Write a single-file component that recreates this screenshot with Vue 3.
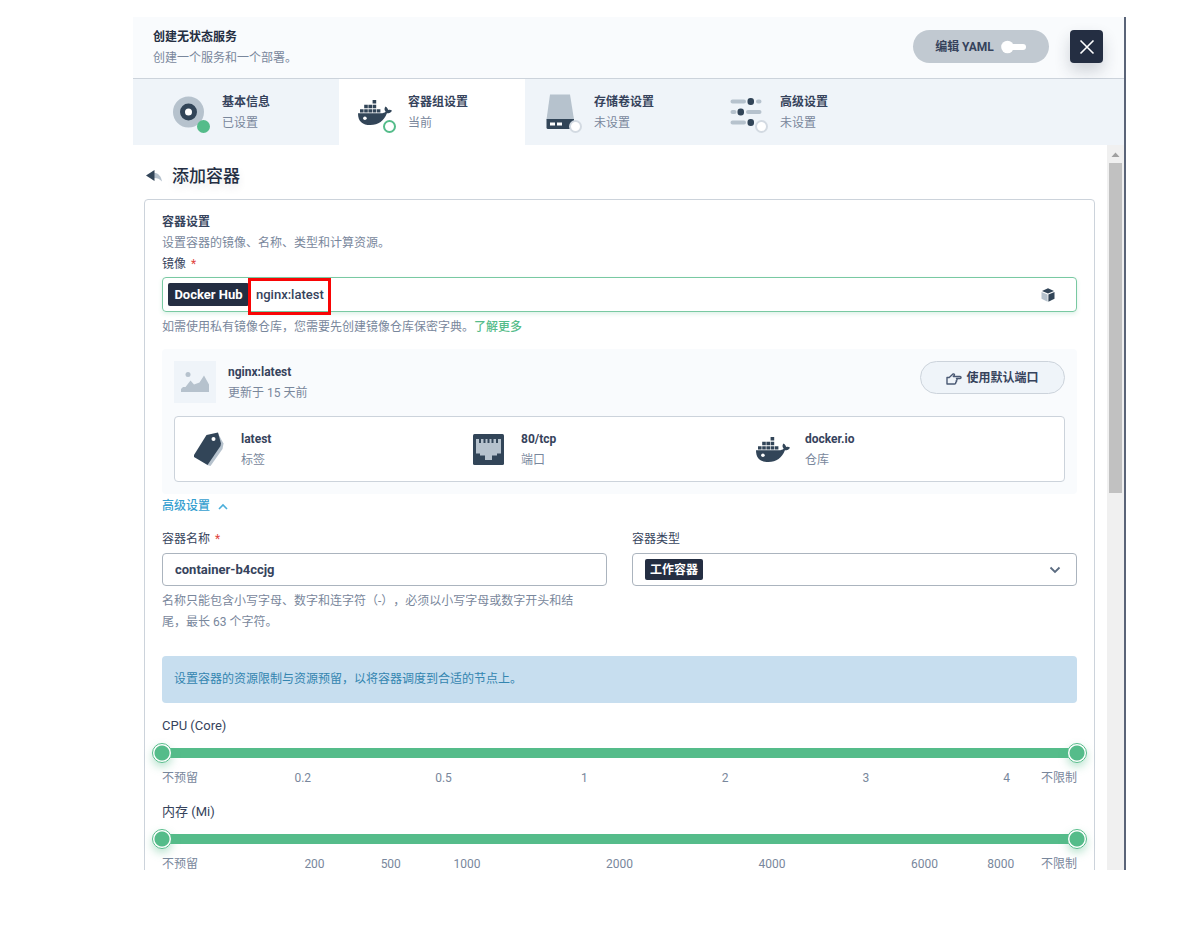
<script setup>
import { ref } from 'vue'

const steps = [
  { key: 'basic', title: '基本信息', state: '已设置', status: 'done' },
  { key: 'pod', title: '容器组设置', state: '当前', status: 'current' },
  { key: 'volume', title: '存储卷设置', state: '未设置', status: 'todo' },
  { key: 'advanced', title: '高级设置', state: '未设置', status: 'todo' }
]

const image = ref('nginx:latest')
const containerName = ref('container-b4ccjg')
const containerType = ref('worker')

const sliders = ref([
  {
    id: 'cpu',
    label: 'CPU (Core)',
    units: 13,
    from: 0,
    to: 13,
    marks: [
      { at: 2, text: '0.2' },
      { at: 4, text: '0.5' },
      { at: 6, text: '1' },
      { at: 8, text: '2' },
      { at: 10, text: '3' },
      { at: 12, text: '4' }
    ]
  },
  {
    id: 'memory',
    label: '内存 (Mi)',
    units: 12,
    from: 0,
    to: 12,
    marks: [
      { at: 2, text: '200' },
      { at: 3, text: '500' },
      { at: 4, text: '1000' },
      { at: 6, text: '2000' },
      { at: 8, text: '4000' },
      { at: 10, text: '6000' },
      { at: 11, text: '8000' }
    ]
  }
])
</script>

<template>
  <div class="dialog">
    <svg class="defs" width="0" height="0" aria-hidden="true">
      <symbol id="docker" viewBox="0 0 34 25">
        <path d="M0 13.2H24.4C26.6 13 27.4 12.3 27.6 11.6C26 9.8 26.3 8 27.5 6.4C29.2 7.4 30 8.8 30.1 10C31.8 9.6 33.2 9.9 34 10.7C33.2 12.4 31.4 13.2 28.9 13.3C26 20.8 20.4 25 12.4 25C4.6 25 0 21.6 0 13.2Z" fill="#324558" />
        <g fill="#324558">
          <path d="M14.6 0h3.6v3.6h-3.6zM6.2 4.8h3.6v3.5H6.2zM10.4 4.8H14v3.5h-3.6zM14.6 4.8h3.6v3.5h-3.6zM2 9.2h3.6v3.3H2zM6.2 9.2h3.6v3.3H6.2zM10.4 9.2H14v3.3h-3.6zM14.6 9.2h3.6v3.3h-3.6zM18.8 9.2h3.6v3.3h-3.6z" />
        </g>
        <circle cx="6.9" cy="18.2" r="1.8" fill="#fff" />
      </symbol>
    </svg>

    <header class="head">
      <div class="head-text">
        <h1>创建无状态服务</h1>
        <p>创建一个服务和一个部署。</p>
      </div>
      <button type="button" class="yaml">
        <span>编辑 YAML</span>
        <svg width="26" height="14" viewBox="0 0 26 14" aria-hidden="true">
          <rect x="8" y="4" width="17" height="6" rx="3" fill="#fff" />
          <circle cx="6.5" cy="7" r="6.3" fill="#fff" />
        </svg>
      </button>
      <button type="button" class="close" aria-label="关闭">
        <svg width="16" height="16" viewBox="0 0 16 16" aria-hidden="true">
          <path d="M1.5 1.5L14.5 14.5M14.5 1.5L1.5 14.5" stroke="#fff" stroke-width="1.6" fill="none" />
        </svg>
      </button>
    </header>

    <nav class="steps">
      <button v-for="s in steps" :key="s.key" type="button" class="step" :class="s.status">
        <span class="step-icon">
          <svg v-if="s.key === 'basic'" width="36" height="36" viewBox="0 0 36 36" aria-hidden="true">
            <circle cx="17.5" cy="18" r="15.5" fill="#b6c2cd" />
            <circle cx="17.5" cy="18" r="6" fill="#fff" stroke="#324558" stroke-width="5" />
          </svg>
          <svg v-else-if="s.key === 'pod'" class="whale" width="34" height="25" aria-hidden="true"><use href="#docker" /></svg>
          <svg v-else-if="s.key === 'volume'" width="36" height="36" viewBox="0 0 36 36" aria-hidden="true">
            <path d="M7 0.5H27L31 25.5H3.500Z" fill="#b6c2cd" />
            <path d="M3.500 25H31V33.500Q31 35 29.500 35H5Q3.500 35 3.500 33.500Z" fill="#324558" />
            <path d="M7 28.500h5v3H7zM14 28.500h5v3h-5z" fill="#fff" />
          </svg>
          <svg v-else width="36" height="36" viewBox="0 0 36 36" aria-hidden="true">
            <g stroke="#b6c2cd" stroke-width="4" stroke-linecap="round">
              <path d="M3.500 7.500H15M29 7.500H30.500M3.500 18H5.500M19 18H30.500M3.500 28.500H15" />
            </g>
            <g fill="#324558">
              <rect x="18.500" y="4" width="6.500" height="7" rx="3" />
              <rect x="8.500" y="14.500" width="6.500" height="7" rx="3" />
              <rect x="18.500" y="25" width="6.500" height="7" rx="3" />
            </g>
          </svg>
          <i class="dot"></i>
        </span>
        <span class="pair">
          <strong>{{ s.title }}</strong>
          <span>{{ s.state }}</span>
        </span>
      </button>
    </nav>

    <div class="body">
      <main class="content">
        <h2>
          <button type="button" class="back" aria-label="返回">
            <svg width="16" height="12" viewBox="0 0 16 12" aria-hidden="true">
              <path d="M8 2.800C12.500 3.200 15.300 6.500 16 11.500C13.800 8.900 11.500 8 8 7.900Z" fill="#b6c2cd" />
              <path d="M0 5.500L8.500 0V11Z" fill="#324558" />
            </svg>
          </button>
          添加容器
        </h2>

        <section class="card">
          <h3>容器设置</h3>
          <p class="muted">设置容器的镜像、名称、类型和计算资源。</p>
          <label class="label" for="image">镜像 <em>*</em></label>
          <div class="image-field">
            <span class="hub">Docker Hub</span>
            <input id="image" v-model="image" type="text" />
            <button type="button" class="pick" aria-label="选择镜像">
              <svg width="14" height="14" viewBox="0 0 14 14" aria-hidden="true">
                <path d="M7 0.300L13 2.900L7 5.600L1 2.900Z" fill="#324558" />
                <path d="M0.500 3.900L6.600 6.600V13.800L0.500 10.800Z" fill="#b6c2cd" />
                <path d="M13.500 3.900L7.400 6.600V13.800L13.500 10.800Z" fill="#324558" />
              </svg>
            </button>
            <i class="marker"></i>
          </div>
          <p class="muted hint">如需使用私有镜像仓库，您需要先创建镜像仓库保密字典。<a href="#">了解更多</a></p>

          <div class="image-info">
            <div class="image-top">
              <span class="thumb">
                <svg width="30" height="24" viewBox="0 0 30 24" aria-hidden="true">
                  <circle cx="8" cy="4.500" r="2.500" fill="#b6c2cd" />
                  <path d="M1 22V19L3 17H5.500L10.500 10.500L14 14.500L19.500 12.500L24 5.500L29 14.500V22Z" fill="#b6c2cd" />
                </svg>
              </span>
              <span class="pair">
                <strong>nginx:latest</strong>
                <span>更新于 15 天前</span>
              </span>
              <button type="button" class="ports">
                <svg width="16" height="12" viewBox="0 0 16 12" aria-hidden="true">
                  <path d="M1 4.500H3.200L7 1C8.200 0.500 8.800 1.500 8.200 2.300L7.300 3.500H14C15.400 3.600 15.400 5.400 14 5.500H10.500C11.400 6 11.200 7.200 10.300 7.400C10.900 8.200 10.500 9 9.700 9.200C10 10.200 9.500 11 8.500 11H1Z" fill="none" stroke="#4a5974" stroke-width="1.400" stroke-linejoin="round" />
                </svg>
                使用默认端口
              </button>
            </div>
            <div class="facts">
              <div class="fact">
                <span class="fact-icon">
                  <svg width="32" height="36" viewBox="0 0 32 36" aria-hidden="true">
                    <path d="M25 2.500L30.500 12.500L29.500 18L17.500 35L14 34Z" fill="#b6c2cd" />
                    <path d="M13.500 4L25 1.500L28 12.500L27.500 15L14.500 34L1 26V24Z" fill="#324558" />
                    <circle cx="20.500" cy="8" r="2" fill="#fff" />
                  </svg>
                </span>
                <span class="pair"><strong>latest</strong><span>标签</span></span>
              </div>
              <div class="fact">
                <span class="fact-icon">
                  <svg width="31" height="31" viewBox="0 0 31 31" aria-hidden="true">
                    <rect width="31" height="31" rx="1.500" fill="#324558" />
                    <path d="M3 5H6V9H8V5H10.500V9H12.500V5H14.500V9H16.500V5H18.500V9H20.500V5H23V9H25V5H28V19.500H24V21.500H19V26H12V21.500H7V19.500H3Z" fill="#b6c2cd" />
                  </svg>
                </span>
                <span class="pair"><strong>80/tcp</strong><span>端口</span></span>
              </div>
              <div class="fact">
                <span class="fact-icon"><svg width="34" height="25" aria-hidden="true"><use href="#docker" /></svg></span>
                <span class="pair"><strong>docker.io</strong><span>仓库</span></span>
              </div>
            </div>
          </div>

          <button type="button" class="toggle">
            高级设置
            <svg width="10" height="7" viewBox="0 0 10 7" aria-hidden="true">
              <path d="M1 6L5 2L9 6" fill="none" stroke="#4aaeda" stroke-width="1.600" />
            </svg>
          </button>

          <div class="columns">
            <div>
              <label class="label" for="name">容器名称 <em>*</em></label>
              <input id="name" v-model="containerName" class="control" type="text" />
              <p class="muted hint name-hint">名称只能包含小写字母、数字和连字符（-），必须以小写字母或数字开头和结尾，最长 63 个字符。</p>
            </div>
            <div>
              <label class="label" for="type">容器类型</label>
              <div class="select">
                <select id="type" v-model="containerType" class="control">
                  <option value="worker">工作容器</option>
                  <option value="init">初始容器</option>
                </select>
                <svg width="12" height="8" viewBox="0 0 12 8" aria-hidden="true">
                  <path d="M1.500 1.500L6 6L10.500 1.500" fill="none" stroke="#5a6b80" stroke-width="1.800" />
                </svg>
              </div>
            </div>
          </div>

          <div class="notice">设置容器的资源限制与资源预留，以将容器调度到合适的节点上。</div>

          <div v-for="s in sliders" :key="s.id" class="slider">
            <label :for="s.id">{{ s.label }}</label>
            <div class="track">
              <input :id="s.id" v-model.number="s.from" type="range" min="0" :max="s.units" />
              <input v-model.number="s.to" type="range" min="0" :max="s.units" :aria-label="s.label + ' 限制'" />
            </div>
            <div class="scale" :style="{ gridTemplateColumns: `repeat(${s.units * 2}, minmax(0, 1fr))` }">
              <span class="first">不预留</span>
              <span v-for="m in s.marks" :key="m.at" :style="{ gridColumn: `${m.at * 2} / span 2` }">{{ m.text }}</span>
              <span class="last">不限制</span>
            </div>
          </div>
        </section>
      </main>
      <div class="scrollbar" aria-hidden="true">
        <svg width="9" height="5" viewBox="0 0 9 5"><path d="M0.500 5L4.500 0.500L8.500 5Z" fill="#a0a0a0" /></svg>
        <div class="bar"></div>
      </div>
    </div>
  </div>
</template>

<style>
body {
  background: #fff;
}
</style>

<style scoped>
* {
  box-sizing: border-box;
}
.dialog {
  display: flex;
  flex-direction: column;
  height: calc(100vh - 74px);
  margin: 17px 72px 57px 133px;
  overflow: hidden;
  border-right: 2px solid #5a6478;
  font-family: Roboto, "Noto Sans CJK SC", sans-serif;
  font-size: 12px;
  line-height: 21px;
  color: #36435c;
  text-spacing-trim: space-all;
}
.defs {
  position: absolute;
}
h1, h2, h3, p {
  margin: 0;
  font-size: 12px;
}
button, input, select {
  font: inherit;
  color: inherit;
}
button {
  padding: 0;
  border: 0;
  background: none;
  cursor: pointer;
}
svg {
  display: block;
  flex: none;
}
.head {
  display: flex;
  flex: none;
  align-items: center;
  height: 62px;
  padding: 0 21px 2px 20px;
  background: #f9fbfd;
  border-bottom: 1px solid #ccd3db;
}
.head-text {
  flex: 1;
  padding-top: 2px;
}
h1 {
  color: #242e42;
}
.head p, .muted {
  color: #79879c;
}
.yaml {
  display: flex;
  align-items: center;
  justify-content: center;
  gap: 7px;
  width: 136px;
  height: 33px;
  margin-right: 21px;
  padding-top: 1px;
  border-radius: 17px;
  background: #c1c9d1;
  font-weight: 700;
}
.close {
  display: grid;
  place-items: center;
  width: 33px;
  height: 33px;
  border-radius: 4px;
  background: #242e42;
  box-shadow: 0 8px 16px rgba(36, 46, 66, 0.2);
}
.steps {
  display: flex;
  flex: none;
  height: 66px;
  padding-left: 20px;
  background: #eff4f9;
}
.step {
  display: flex;
  align-items: center;
  gap: 15px;
  width: 186px;
  padding-left: 18px;
  text-align: left;
}
.step.current {
  background: #fff;
}
.step-icon {
  position: relative;
  display: grid;
  place-items: center;
  width: 36px;
  height: 36px;
}
.dot {
  position: absolute;
  right: -3px;
  bottom: -3px;
  width: 13px;
  height: 13px;
  border: 2px solid #d3dae2;
  border-radius: 50%;
  background: #fff;
}
.done .dot {
  border-color: #55bc8a;
  background: #55bc8a;
}
.current .dot {
  border-color: #55bc8a;
}
.pair {
  display: flex;
  flex-direction: column;
  padding-top: 2px;
  color: #79879c;
}
.pair strong {
  color: #36435c;
}
.body {
  display: flex;
  flex: 1;
  min-height: 0;
}
.content {
  flex: 1;
  min-width: 0;
  padding: 20px 12px 0 11px;
  overflow: hidden;
}
h2 {
  display: flex;
  align-items: center;
  gap: 10px;
  height: 22px;
  margin-bottom: 12px;
  padding-left: 2px;
  font-size: 17px;
  font-weight: 500;
  color: #242e42;
  text-shadow: 0 4px 8px rgba(36, 46, 66, 0.1);
}
.card {
  padding: 12px 17px;
  border: 1px solid #ccd3db;
  border-radius: 4px;
}
.label {
  display: block;
}
em {
  margin-left: 2px;
  color: #e0443e;
  font-style: normal;
}
.image-field {
  position: relative;
  display: flex;
  align-items: center;
  height: 35px;
  margin-top: 2px;
  padding: 0 21px 0 5px;
  border: 1px solid #79c9a2;
  border-radius: 4px;
  box-shadow: 0 2px 4px rgba(85, 188, 138, 0.2);
}
.hub {
  width: 81px;
  border-radius: 2px;
  background: #242e42;
  color: #fff;
  font-size: 13px;
  font-weight: 700;
  line-height: 23px;
  text-align: center;
}
.image-field input {
  flex: 1;
  min-width: 0;
  padding: 0 7px;
  border: 0;
  outline: 0;
  background: none;
  font-size: 13px;
  font-weight: 500;
}
.marker {
  position: absolute;
  top: 0;
  left: 85px;
  width: 83px;
  height: 37px;
  border: 3px solid #f80505;
  pointer-events: none;
}
.hint {
  margin-top: 5px;
}
a {
  color: #55bc8a;
  font-weight: 500;
  text-decoration: none;
}
.image-info {
  margin-top: 11px;
  padding: 12px;
  border-radius: 4px;
  background: #f9fbfd;
}
.image-top {
  display: flex;
  align-items: center;
  gap: 12px;
  height: 42px;
  margin-bottom: 13px;
}
.thumb {
  display: grid;
  place-items: center;
  width: 42px;
  height: 42px;
  background: #eff4f9;
}
.ports {
  display: flex;
  align-items: center;
  justify-content: center;
  align-self: flex-start;
  gap: 4px;
  width: 145px;
  height: 33px;
  margin-left: auto;
  padding-top: 2px;
  border: 1px solid #ccd3db;
  border-radius: 17px;
  background: #eff4f9;
  font-weight: 700;
}
.facts {
  display: grid;
  grid-template-columns: 280fr 284fr 287fr;
  align-items: center;
  height: 66px;
  padding: 0 21px 0 17px;
  border: 1px solid #ccd3db;
  border-radius: 4px;
  background: #fff;
}
.fact {
  display: flex;
  align-items: center;
  gap: 16px;
}
.fact-icon {
  display: grid;
  place-items: center;
  width: 33px;
}
.toggle {
  display: flex;
  align-items: center;
  gap: 8px;
  height: 21px;
  margin-top: 2px;
  color: #369fd0;
  font-weight: 500;
}
.columns {
  display: grid;
  grid-template-columns: 1fr 1fr;
  gap: 25px;
  margin-top: 12px;
}
.control {
  display: block;
  width: 100%;
  height: 33px;
  margin-top: 3px;
  padding: 0 12px;
  border: 1px solid #abb4be;
  border-radius: 4px;
  outline: 0;
  background: #fff;
  font-size: 13px;
  font-weight: 700;
}
.name-hint {
  padding-right: 18px;
}
.select {
  position: relative;
}
.select::before {
  content: "";
  position: absolute;
  top: 6px;
  left: 13px;
  width: 58px;
  height: 21px;
  border-radius: 2px;
  background: #242e42;
}
.select .control {
  position: relative;
  padding: 1px 17px 0;
  appearance: none;
  background: none;
  color: #fff;
  font-size: 12px;
}
.select svg {
  position: absolute;
  top: 13px;
  right: 16px;
  pointer-events: none;
}
.notice {
  margin: 23px 0 12px;
  padding: 13px 12px;
  border-radius: 4px;
  background: #c7deef;
  color: #3385b0;
}
.slider {
  margin-bottom: 13px;
}
.slider label {
  display: block;
  font-size: 13px;
}
.track {
  position: relative;
  height: 20px;
  margin: 7px 0 5px;
  background: linear-gradient(#55bc8a, #55bc8a) center / 100% 10px no-repeat;
}
.slider + .slider {
  margin-top: -1px;
}
.track input {
  position: absolute;
  top: 0;
  left: -10px;
  width: calc(100% + 20px);
  height: 20px;
  margin: 0;
  appearance: none;
  background: none;
  pointer-events: none;
}
.track input::-webkit-slider-thumb {
  appearance: none;
  width: 20px;
  height: 20px;
  border: 1px solid #55bc8a;
  border-radius: 50%;
  background: radial-gradient(circle closest-side, #55bc8a 7px, #fff 8px);
  box-shadow: 0 4px 8px rgba(85, 188, 138, 0.4);
  pointer-events: auto;
}
.scale {
  display: grid;
  color: #79879c;
  white-space: nowrap;
}
.scale span {
  grid-row: 1;
  justify-self: center;
}
.scale .first {
  grid-column: 1 / span 2;
  justify-self: start;
}
.scale .last {
  grid-column: -3 / span 2;
  justify-self: end;
}
.scrollbar {
  display: flex;
  flex-direction: column;
  align-items: center;
  gap: 6px;
  width: 17px;
  padding-top: 7px;
  background: #f0f0f0;
}
.bar {
  width: 13px;
  height: 46%;
  background: #c1c1c1;
}
</style>
